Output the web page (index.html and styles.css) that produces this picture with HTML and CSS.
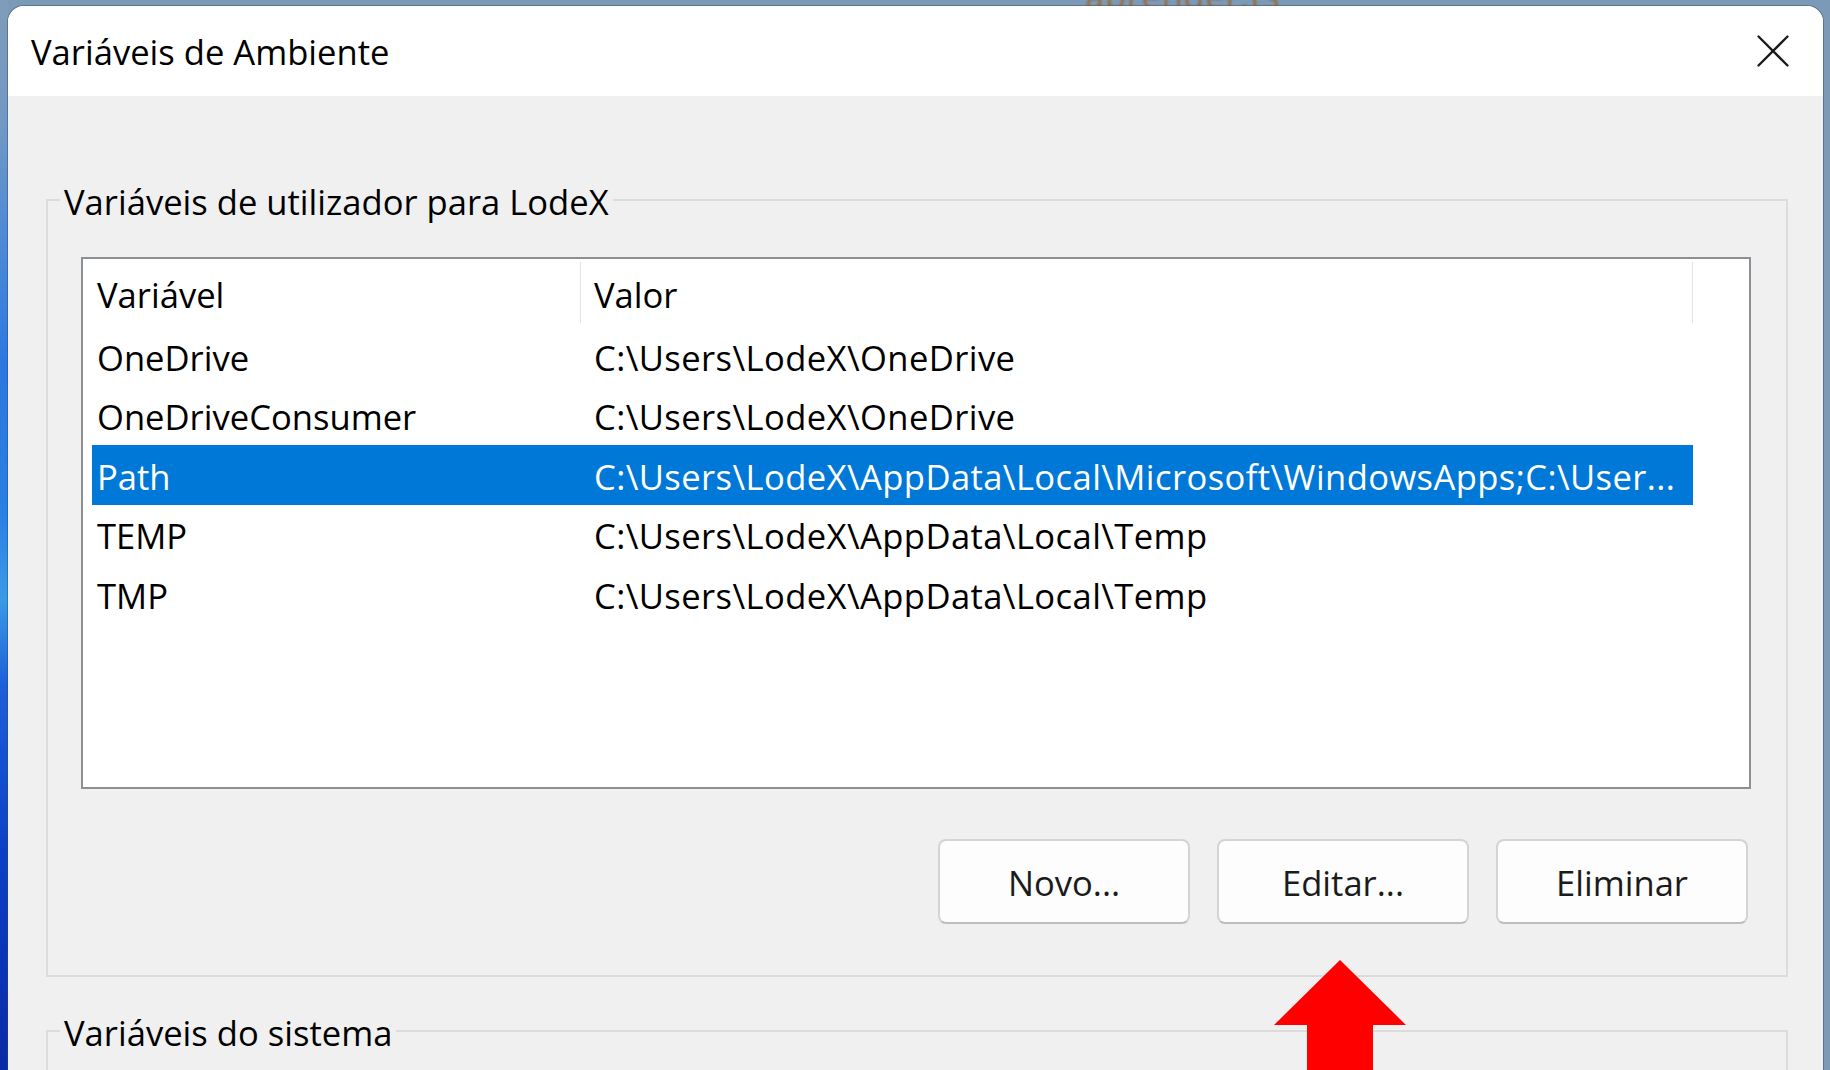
FILE: index.html
```
<!DOCTYPE html>
<html lang="pt">
<head>
<meta charset="utf-8">
<title>Variáveis de Ambiente</title>
<link rel="stylesheet" href="styles.css">
</head>
<body>
<div class="desktop">
  <span class="behind-text">aprender.ts</span>
  <div class="window">
    <header class="titlebar">
      <span class="title">Variáveis de Ambiente</span>
      <svg class="close" width="32" height="32" viewBox="0 0 32 32" aria-label="Fechar">
        <path d="M1.5 1.5 L30.5 30.5 M30.5 1.5 L1.5 30.5" stroke="#1a1a1a" stroke-width="2.3" fill="none" stroke-linecap="round"/>
      </svg>
    </header>
    <main class="content">
      <fieldset class="group">
        <legend>Variáveis de utilizador para LodeX</legend>
        <div class="listbox">
          <div class="lv-header">
            <div class="hcell hc1">Variável</div>
            <div class="hcell hc2">Valor</div>
          </div>
          <div class="row"><span class="c1">OneDrive</span><span class="c2">C:\Users\LodeX\OneDrive</span></div>
          <div class="row"><span class="c1">OneDriveConsumer</span><span class="c2">C:\Users\LodeX\OneDrive</span></div>
          <div class="row selected"><span class="c1">Path</span><span class="c2">C:\Users\LodeX\AppData\Local\Microsoft\WindowsApps;C:\User...</span></div>
          <div class="row"><span class="c1">TEMP</span><span class="c2">C:\Users\LodeX\AppData\Local\Temp</span></div>
          <div class="row"><span class="c1">TMP</span><span class="c2">C:\Users\LodeX\AppData\Local\Temp</span></div>
        </div>
        <div class="buttons">
          <button class="btn">Novo...</button>
          <button class="btn">Editar...</button>
          <button class="btn">Eliminar</button>
        </div>
      </fieldset>
      <fieldset class="group group-sys">
        <legend>Variáveis do sistema</legend>
      </fieldset>
    </main>
  </div>
  <svg class="arrow" width="132" height="110" viewBox="0 0 132 110">
    <polygon points="66,0 0,65 33,65 33,110 99,110 99,65 132,65" fill="#ff0000"/>
  </svg>
</div>
</body>
</html>
```

FILE: styles.css
```
html, body {
  margin: 0;
  padding: 0;
}

body {
  font-family: "Open Sans", "Noto Sans", sans-serif;
  overflow: hidden;
}

.desktop {
  position: relative;
  width: 1830px;
  height: 1070px;
  overflow: hidden;
  box-sizing: border-box;
  padding: 6px 7px 0 8px;
  display: flex;
  background:
    linear-gradient(to bottom, #7f9cba 0, #7098c4 12%, #4f8ad6 22%, #2d78e0 34%, #2a7fe4 48%, #3a9be6 56%, #1d5fd8 64%, #0c3fc4 80%, #0a2aa6 100%) 0 0 / 8px 100% no-repeat,
    #7b9ab7;
}

.behind-text {
  position: absolute;
  left: 1085px;
  top: -27px;
  font-size: 34px;
  color: #9a6a3a;
  filter: blur(0.8px);
  letter-spacing: 1px;
}

.window {
  position: relative;
  z-index: 1;
  flex: 1;
  display: flex;
  flex-direction: column;
  background: #f0f0f0;
  border-radius: 16px 16px 0 0;
  box-shadow: 0 0 0 1px rgba(50, 70, 95, 0.45);
  overflow: hidden;
}

.titlebar {
  flex-shrink: 0;
  height: 90px;
  background: #ffffff;
  display: flex;
  align-items: center;
  justify-content: space-between;
  padding: 0 34px 0 23px;
}

.title {
  font-size: 34.6px;
  color: #000;
}

.close {
  display: block;
}

.content {
  padding: 78px 35px 0 38px;
  color: #000;
  font-size: 34.6px;
}

.group {
  margin: 0;
  min-width: 0;
  border: 2px solid #dcdcdc;
  padding: 31px 35px 51px 0;
}

.group legend {
  margin-left: 12px;
  padding: 4px 4px 0;
  font-size: 34.6px;
  line-height: 48px;
  color: #000;
}

.group-sys {
  margin-top: 28px;
  height: 300px;
}

.listbox {
  margin-left: 33px;
  height: 532px;
  box-sizing: border-box;
  background: #ffffff;
  border: 2px solid #8c8f94;
}

.lv-header {
  display: flex;
  align-items: center;
  height: 67px;
}

.hcell {
  height: 61px;
  display: flex;
  align-items: center;
  box-sizing: border-box;
  padding-top: 4px;
  border-right: 1px solid #e3e3e3;
  white-space: nowrap;
}

.hc1 {
  width: 498px;
  padding-left: 14px;
}

.hc2 {
  width: 1112px;
  padding-left: 13px;
}

.row {
  display: flex;
  align-items: center;
  height: 59.5px;
  width: 1601px;
  margin-left: 9px;
  white-space: nowrap;
}

.row span {
  padding-top: 3px;
}

.row .c1 {
  width: 488px;
  flex-shrink: 0;
  padding-left: 5px;
  box-sizing: border-box;
}

.row .c2 {
  padding-left: 14px;
  letter-spacing: 0.4px;
  overflow: hidden;
}

.row.selected {
  background: #0078d7;
  color: #ffffff;
}

.buttons {
  display: flex;
  justify-content: flex-end;
  gap: 27px;
  margin-top: 50px;
  margin-right: 3px;
}

.btn {
  width: 252px;
  height: 85px;
  box-sizing: border-box;
  font-family: inherit;
  font-size: 34.6px;
  color: #1b1b1b;
  background: #fdfdfd;
  border: 2px solid #d4d4d4;
  border-bottom-color: #bdbdbd;
  border-radius: 8px;
  padding: 2px 0 0;
}

.arrow {
  position: absolute;
  left: 1274px;
  top: 960px;
  z-index: 2;
}
```
